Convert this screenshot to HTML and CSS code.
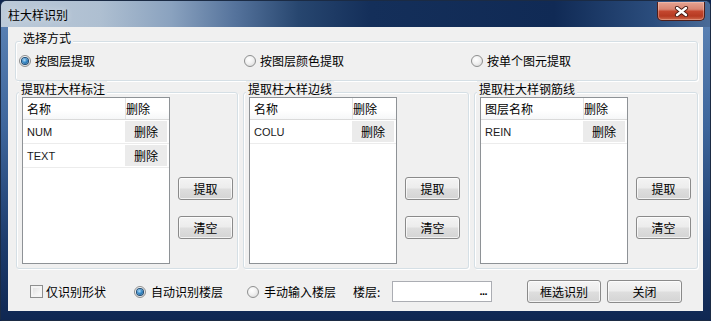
FILE: index.html
```html
<!DOCTYPE html>
<html lang="zh-CN">
<head>
    <meta charset="UTF-8">
    <title>柱大样识别</title>
    <link rel="stylesheet" href="styles.css">
</head>
<body>
    <div class="window">
        <div class="titlebar">
            <span class="title">柱大样识别</span>
            <span class="close-btn">
                <svg width="15" height="11" viewBox="0 0 15 11">
                    <path d="M3 2 L12 9 M12 2 L3 9" stroke="#4a1d16" stroke-width="4.2" stroke-linecap="round"/>
                    <path d="M3 2 L12 9 M12 2 L3 9" stroke="#fff" stroke-width="2.4" stroke-linecap="round"/>
                </svg>
            </span>
        </div>

        <div class="client">
            <div class="group mode-group">
                <div class="group-title">选择方式</div>
                <div class="mode-options">
                    <label class="opt"><span class="radio on"></span>按图层提取</label>
                    <label class="opt"><span class="radio"></span>按图层颜色提取</label>
                    <label class="opt"><span class="radio"></span>按单个图元提取</label>
                </div>
            </div>

            <div class="layer-groups">
                <div class="group">
                    <div class="group-title">提取柱大样标注</div>
                    <div class="group-body">
                        <div class="list">
                            <div class="list-row list-head"><span class="cell">名称</span><span class="cell del-col">删除</span></div>
                            <div class="list-row"><span class="cell name">NUM</span><span class="cell del-col"><span class="del-btn">删除</span></span></div>
                            <div class="list-row"><span class="cell name">TEXT</span><span class="cell del-col"><span class="del-btn">删除</span></span></div>
                        </div>
                        <div class="tools">
                            <button class="btn">提取</button>
                            <button class="btn">清空</button>
                        </div>
                    </div>
                </div>

                <div class="group">
                    <div class="group-title">提取柱大样边线</div>
                    <div class="group-body">
                        <div class="list">
                            <div class="list-row list-head"><span class="cell">名称</span><span class="cell del-col">删除</span></div>
                            <div class="list-row"><span class="cell name">COLU</span><span class="cell del-col"><span class="del-btn">删除</span></span></div>
                        </div>
                        <div class="tools">
                            <button class="btn">提取</button>
                            <button class="btn">清空</button>
                        </div>
                    </div>
                </div>

                <div class="group">
                    <div class="group-title">提取柱大样钢筋线</div>
                    <div class="group-body">
                        <div class="list">
                            <div class="list-row list-head"><span class="cell">图层名称</span><span class="cell del-col">删除</span></div>
                            <div class="list-row"><span class="cell name">REIN</span><span class="cell del-col"><span class="del-btn">删除</span></span></div>
                        </div>
                        <div class="tools">
                            <button class="btn">提取</button>
                            <button class="btn">清空</button>
                        </div>
                    </div>
                </div>
            </div>

            <div class="bottom-bar">
                <label class="opt shape-only"><span class="checkbox"></span>仅识别形状</label>
                <label class="opt auto-floor"><span class="radio on"></span>自动识别楼层</label>
                <label class="opt manual-floor"><span class="radio"></span>手动输入楼层</label>
                <span class="floor-label">楼层:</span>
                <span class="floor-input"><span class="dots">...</span></span>
                <button class="btn btn-wide pick-btn">框选识别</button>
                <button class="btn btn-wide close-dlg">关闭</button>
            </div>
        </div>
    </div>
</body>
</html>
```

FILE: styles.css
```css
* {
    margin: 0;
    padding: 0;
    box-sizing: border-box;
}

body {
    font-family: "Noto Sans CJK SC", "Noto Sans", sans-serif;
    font-size: 12px;
    line-height: 16px;
    color: #000;
    background: #0d2450;
}

.window {
    width: 711px;
    height: 321px;
    border: 1px solid #1b2b44;
    border-radius: 6px 6px 2px 2px;
    padding: 0 7px 9px 7px;
    background: linear-gradient(180deg, #5f86b8 0%, #3d659b 40%, #1d3c6d 75%, #0f2752 100%);
    display: flex;
    flex-direction: column;
    overflow: hidden;
}

.titlebar {
    height: 26px;
    margin: 0 -7px;
    padding: 0 6px 0 7px;
    display: flex;
    justify-content: space-between;
    background: linear-gradient(90deg, #bccad9 0%, #aebfd1 14%, #8aa2bf 24%, #55739c 33%, #27466f 42%, #142f5a 52%, #102a55 78%, #2b4d7d 92%, #4a6b98 100%);
    border-radius: 5px 5px 0 0;
}

.title {
    padding-top: 6px;
    text-shadow: 0 0 6px rgba(255, 255, 255, 0.7);
}

.close-btn {
    width: 48px;
    height: 19px;
    margin-top: 1px;
    margin-right: -1px;
    display: flex;
    align-items: center;
    justify-content: center;
    border: 1px solid #4f1e19;
    border-top: none;
    border-radius: 0 0 5px 5px;
    background: linear-gradient(180deg, #e6a493 0%, #d88471 40%, #c4472f 52%, #b63a22 78%, #cf6a4d 100%);
    box-shadow: inset 0 0 0 1px rgba(255, 220, 210, 0.35);
}

.client {
    flex: 1;
    background: #f0f0f0;
    padding: 14px 5px 0 7px;
}

/* group boxes */
.group {
    border: 1px solid #d5dfe5;
    border-radius: 3px;
    box-shadow: inset 1px 1px 0 #fff, 1px 1px 0 #fff;
}

.group-title {
    width: fit-content;
    margin: -12px 0 0 2px;
    padding: 0 2px;
    background: #f0f0f0;
}

.mode-group {
    padding: 0 0 11px 3px;
}

.mode-options {
    margin-top: 7px;
    display: grid;
    grid-template-columns: 225px 227px 1fr;
}

.opt {
    display: flex;
    align-items: center;
    gap: 4px;
    white-space: nowrap;
}

.radio {
    width: 12px;
    height: 12px;
    border-radius: 50%;
    border: 1px solid #8e8f8f;
    background: radial-gradient(circle at 40% 35%, #ffffff 0%, #f1f1f1 45%, #d4d4d4 100%);
    display: flex;
    align-items: center;
    justify-content: center;
}

.radio.on::after {
    content: "";
    width: 6px;
    height: 6px;
    border-radius: 50%;
    background: radial-gradient(circle at 40% 35%, #b5dcf7 0%, #3a8cc9 45%, #0f4f86 100%);
    box-shadow: 0 0 0 1px #1d4a72;
}

.checkbox {
    width: 13px;
    height: 13px;
    border: 1px solid #8e8f8f;
    background: linear-gradient(135deg, #dcdcdc 0%, #f2f2f2 60%, #fff 100%);
    box-shadow: inset 0 0 0 2px #f4f4f4;
}

.layer-groups {
    margin: 11px 0 0 1px;
    display: grid;
    grid-template-columns: 222px 226px 224px;
    column-gap: 5px;
}

.group-body {
    display: flex;
    gap: 8px;
    padding: 0 0 4px 5px;
}

/* list views */
.list {
    width: 148px;
    height: 167px;
    border: 1px solid #8e9296;
    background: #fff;
}

.list-row {
    display: grid;
    grid-template-columns: 1fr 44px;
    height: 24px;
    border-bottom: 1px solid #ececec;
}

.list-head {
    height: 22px;
    border-bottom: 1px solid #dadada;
    background: linear-gradient(180deg, #fff 0%, #fff 60%, #f6f7f8 100%);
}

.cell {
    padding: 0 4px;
    display: flex;
    align-items: center;
}

.list-head .del-col {
    border-left: 1px solid #e2e2e2;
    padding-left: 3px;
}

.list-row .name {
    font-family: "Liberation Sans", Arial, sans-serif;
    font-size: 11px;
    color: #1a1a1a;
}

.list-row .del-col {
    padding: 0;
}

.del-btn {
    width: 100%;
    height: 21px;
    margin-right: 2px;
    background: #ebebeb;
    display: flex;
    align-items: center;
    justify-content: center;
}

.tools {
    display: flex;
    flex-direction: column;
    gap: 16px;
    padding-top: 80px;
}

/* buttons */
.btn {
    width: 55px;
    height: 23px;
    font-family: inherit;
    font-size: 12px;
    color: #000;
    border: 1px solid #8a8a8a;
    border-radius: 3px;
    background: linear-gradient(180deg, #f4f4f4 0%, #ececec 48%, #dedede 52%, #d4d4d4 100%);
    box-shadow: inset 0 0 0 1px rgba(255, 255, 255, 0.7);
}

.btn-wide {
    width: 74px;
}

/* bottom row */
.bottom-bar {
    margin-top: 11px;
    height: 23px;
    padding-left: 15px;
    display: flex;
    align-items: center;
}

.shape-only {
    gap: 3px;
}

.auto-floor {
    margin-left: 28px;
    gap: 5px;
}

.manual-floor {
    margin-left: 24px;
    gap: 5px;
}

.floor-label {
    margin-left: 17px;
    width: 39px;
}

.floor-input {
    width: 100px;
    height: 21px;
    border: 1px solid #abadb3;
    background: #fff;
    display: flex;
    justify-content: flex-end;
    align-items: center;
    padding-right: 4px;
}

.dots {
    font-family: "Liberation Sans", Arial, sans-serif;
    font-weight: bold;
    font-size: 11px;
    letter-spacing: -0.5px;
    margin-top: -2px;
}

.pick-btn {
    margin-left: 35px;
}

.close-dlg {
    margin-left: 6px;
    width: 75px;
}
```
